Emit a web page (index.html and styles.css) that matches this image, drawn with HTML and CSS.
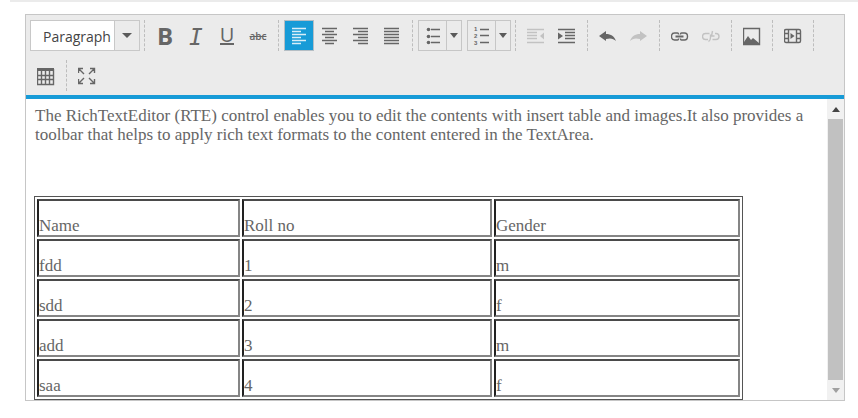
FILE: index.html
```html
<!DOCTYPE html>
<html lang="en">
<head>
<meta charset="utf-8">
<title>RichTextEditor</title>
<link rel="stylesheet" href="styles.css">
</head>
<body>
<hr class="rule">
<main class="editor">
  <div class="toolbar" role="toolbar" aria-label="Formatting">
    <div class="group">
      <div class="combo">
        <select class="combo-select" aria-label="Format"><option>Paragraph</option></select>
        <span class="combo-arrow"></span>
      </div>
    </div>
    <div class="group">
      <button class="tool bold" aria-label="Bold">B</button>
      <button class="tool italic" aria-label="Italic">I</button>
      <button class="tool underline" aria-label="Underline"><span>U</span></button>
      <button class="tool strike" aria-label="Strikethrough">abc</button>
    </div>
    <div class="group">
      <button class="tool active" aria-label="Align left"><svg viewBox="0 0 18 20"><path d="M2 2.5h14M2 5.5h9M2 8.5h14M2 11.5h9M2 14.5h14M2 17.5h9"/></svg></button>
      <button class="tool" aria-label="Align center"><svg viewBox="0 0 18 20"><path d="M1 2.5h15M4 5.5h9M1 8.5h15M4 11.5h9M1 14.5h15M4 17.5h9"/></svg></button>
      <button class="tool" aria-label="Align right"><svg viewBox="0 0 18 20"><path d="M1 2.5h15M6 5.5h10M1 8.5h15M6 11.5h10M1 14.5h15M6 17.5h10"/></svg></button>
      <button class="tool" aria-label="Justify"><svg viewBox="0 0 18 20"><path d="M1 2.5h15M1 5.5h15M1 8.5h15M1 11.5h15M1 14.5h15M1 17.5h15"/></svg></button>
    </div>
    <div class="group lists">
      <div class="split">
        <button class="split-main" aria-label="Bulleted list"><svg viewBox="0 0 18 20"><path d="M7 3.5h9M7 10.5h9M7 16.5h9"/><g class="fill"><circle cx="4.5" cy="3.5" r="1.8"/><circle cx="4.5" cy="10.5" r="1.8"/><circle cx="4.5" cy="16.5" r="1.8"/></g></svg></button>
        <button class="split-arrow" aria-label="Bullet styles"></button>
      </div>
      <div class="split">
        <button class="split-main" aria-label="Numbered list"><svg viewBox="0 0 18 20"><path d="M7 3.5h9M7 9.5h9M7 16.5h9"/><g class="digits"><text x="1" y="5">1</text><text x="1" y="12">2</text><text x="1" y="19">3</text></g></svg></button>
        <button class="split-arrow" aria-label="Number styles"></button>
      </div>
    </div>
    <div class="group">
      <button class="tool" disabled aria-label="Outdent"><svg viewBox="0 0 18 20"><path d="M0 3.5h17M0 6.5h10M0 9.5h10M0 12.5h10M0 16.5h17"/><path class="fill" d="M17 6.5v7l-4-3.5z"/></svg></button>
      <button class="tool" aria-label="Indent"><svg viewBox="0 0 18 20"><path d="M0 3.5h17M7 6.5h10M7 9.5h10M7 12.5h10M0 16.5h17"/><path class="fill" d="M0 6.5v7l5-3.5z"/></svg></button>
    </div>
    <div class="group">
      <button class="tool" aria-label="Undo"><svg viewBox="0 0 18 20"><path class="fill" d="M0 10l7-5v3c5 0 8.5 2.5 10 7-2.5-2.5-5.5-3.2-10-2v2z"/></svg></button>
      <button class="tool" disabled aria-label="Redo"><svg viewBox="0 0 18 20"><path class="fill" d="M17 10l-7-5v3c-5 0-8.5 2.5-10 7 2.5-2.5 5.5-3.2 10-2v2z"/></svg></button>
    </div>
    <div class="group">
      <button class="tool" aria-label="Link"><svg viewBox="0 0 18 20"><path d="M7.5 8.5V8q0-1-1-1h-3q-3 0-3 3.5t3 3.5h3q1 0 1-1v-.5M9.5 8.5V8q0-1 1-1h3q3 0 3 3.5t-3 3.5h-3q-1 0-1-1v-.5"/><path d="M4.5 10.5h8" class="thick"/></svg></button>
      <button class="tool" disabled aria-label="Remove link"><svg viewBox="0 0 18 20"><path d="M7.5 7.5h-4q-3 0-3 3t3 3h2.5M8.5 8.5v3q0 3-2 4M10.5 5l-1 5h3M13 7.500h1q3 0 3 3t-3 3h-3.500"/></svg></button>
    </div>
    <div class="group">
      <button class="tool" aria-label="Insert image"><svg viewBox="0 0 18 20"><path d="M.5 2.5h16v16H.5z"/><path class="fill" d="M1 18v-2l4-6 3 4 2-2 6 5v1z"/></svg></button>
    </div>
    <div class="group">
      <button class="tool" aria-label="Insert video"><svg viewBox="0 0 18 20"><rect x=".5" y="3.5" width="16" height="13" rx="1.5"/><path d="M4.5 3.5v13M12.5 3.5v13M1 7.5h3.500M1 12.5h3.500M12.5 7.5h3.500M12.5 12.5h3.500"/><path class="fill" d="M6.500 7v6l4-3z"/></svg></button>
    </div>
    <div class="group">
      <button class="tool" aria-label="Insert table"><svg viewBox="0 0 18 20"><path d="M.5 3v15.5h16V3M.5 9.5h16M.5 13.5h16M4.500 4v14M8.5 4v14M12.5 4v14"/><path class="fill" d="M0 2h17v3H0z"/></svg></button>
    </div>
    <div class="group last">
      <button class="tool" aria-label="Maximize"><svg viewBox="0 0 18 20"><path d="M.5 7V2.5H5M1 3l5 5M12 2.5h4.500V7M16 3l-5 5M.5 13v4.500H5M1 17l5-5M12 17.500h4.500V13M16 17l-5-5"/></svg></button>
    </div>
  </div>
  <div class="body">
    <div class="content">
      <p class="intro">The RichTextEditor (RTE) control enables you to edit the contents with insert table and images.It also provides a toolbar that helps to apply rich text formats to the content entered in the TextArea.</p>
      <table class="grid">
        <colgroup><col class="col-name"><col class="col-roll"><col class="col-gender"></colgroup>
        <tbody>
          <tr><td>Name</td><td>Roll no</td><td>Gender</td></tr>
          <tr><td>fdd</td><td>1</td><td>m</td></tr>
          <tr><td>sdd</td><td>2</td><td>f</td></tr>
          <tr><td>add</td><td>3</td><td>m</td></tr>
          <tr><td>saa</td><td>4</td><td>f</td></tr>
        </tbody>
      </table>
    </div>
    <div class="scrollbar" aria-hidden="true">
      <span class="scroll-end up"></span>
      <span class="thumb"></span>
      <span class="scroll-end down"></span>
    </div>
  </div>
</main>
</body>
</html>
```
FILE: styles.css
```css
* { box-sizing: border-box; }

body {
  margin: 0;
  background: #fff;
  color: #5f5f5f;
  font-family: "Open Sans", "Noto Sans", sans-serif;
}

.rule {
  height: 2px;
  margin: 0 0 12px 10px;
  border: 0;
  background: #ebebeb;
}

.editor {
  margin: 0 13px 0 25px;
  border: 1px solid #c6c6c6;
}

.toolbar {
  display: flex;
  flex-wrap: wrap;
  row-gap: 9px;
  padding: 5px 0 4px;
  background: #ebebeb;
  border-bottom: 4px solid #179bd7;
}

.group {
  display: flex;
  gap: 1px;
  height: 31px;
  padding: 0 5px;
  border-right: 1px dashed #bdbdbd;
}
.group:first-child { padding: 0 4px; }
.group.lists { gap: 5px; padding-right: 4px; }
.group.last { border-right: 0; }

button {
  margin: 0;
  padding: 0;
  border: 0;
  background: transparent;
  color: #666;
  font-family: inherit;
}

.tool {
  display: flex;
  align-items: center;
  justify-content: center;
  width: 30px;
  height: 31px;
}
.tool:disabled { color: #c2c2c2; }
.tool.active {
  background: #179bd7;
  border: 1px solid #b5bec4;
  color: #d9eef8;
}

svg {
  display: block;
  width: 18px;
  height: 20px;
  fill: none;
  stroke: currentColor;
  stroke-width: 1.4;
}
.fill { fill: currentColor; stroke: none; }
.thick { stroke-width: 2; }
.digits {
  fill: currentColor;
  stroke: none;
  font: bold 6px "Liberation Sans", sans-serif;
}

.bold { font-size: 24px; font-weight: 700; line-height: 31px; }
.italic {
  padding-top: 3px;
  font: italic 23px/28px "DejaVu Sans Mono", monospace;
}
.underline { font-size: 20px; }
.underline span { line-height: 16px; border-bottom: 2px solid currentColor; }
.strike { padding-top: 1px; font-size: 10px; font-weight: 600; text-decoration: line-through; }

.combo {
  display: flex;
  width: 110px;
  border: 1px solid #c8c8c8;
  background: #fff;
}
.combo-select {
  flex: 1;
  min-width: 0;
  padding: 2px 0 0 12px;
  border: 0;
  appearance: none;
  background: transparent;
  color: #444;
  font: 14px "Open Sans", "Noto Sans", sans-serif;
}
.combo-arrow {
  display: grid;
  place-items: center;
  width: 25px;
  border-left: 1px solid #c8c8c8;
  background: #ebebeb;
}
.combo-arrow::before,
.split-arrow::before,
.scroll-end::before {
  content: "";
  border: 4px solid transparent;
  border-bottom: 0;
  border-top: 5px solid #5a5a5a;
}
.combo-arrow::before { border-left-width: 5px; border-right-width: 5px; }

.split {
  display: flex;
  width: 44px;
  border: 1px solid #c6c6c6;
}
.split-main {
  display: grid;
  place-items: center;
  flex: 1;
}
.split-arrow {
  display: grid;
  place-items: center;
  width: 15px;
  border-left: 1px solid #c6c6c6;
}

.body { display: flex; }

.content {
  flex: 1;
  min-width: 0;
  padding: 7px 10px 0 9px;
  color: #666;
  font: 17px/19px "Liberation Serif", serif;
}
.intro { margin: 0 0 52px; }

.grid {
  width: calc(100% - 73px);
  margin-left: -1px;
  border: 1px solid #555;
  border-spacing: 2px;
  table-layout: fixed;
}
.col-name { width: 203px; }
.col-roll { width: 250px; }
.grid td {
  height: 38px;
  padding: 0;
  border: 2px solid;
  border-color: #4a4a4a #858585 #858585 #222;
  vertical-align: bottom;
}

.scrollbar {
  display: flex;
  flex-direction: column;
  width: 17px;
  background: #f1f1f1;
}
.scroll-end {
  display: grid;
  place-items: center;
  height: 20px;
}
.scroll-end.up::before { transform: rotate(180deg); border-top-color: #444; }
.scroll-end.down::before { border-top-color: #a0a0a0; }
.thumb {
  flex: 1;
  margin: 0 1px;
  background: #c1c1c1;
}
```
